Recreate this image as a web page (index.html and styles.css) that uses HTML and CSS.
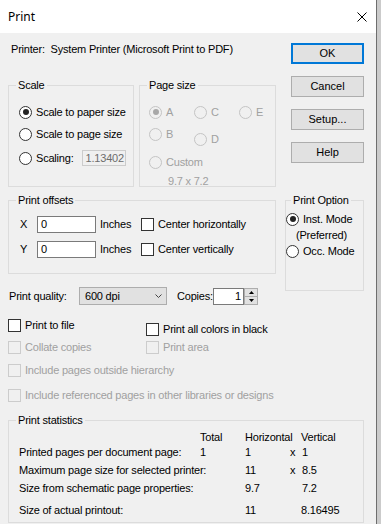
FILE: index.html
```html
<!DOCTYPE html>
<html lang="en">
<head>
    <meta charset="UTF-8">
    <title>Print</title>
    <link rel="stylesheet" href="styles.css">
</head>
<body>

    <div class="window">
        <div class="titlebar">
            <span class="title">Print</span>
            <svg class="close" width="10" height="10" viewBox="0 0 10 10">
                <path d="M0.5 0.5 L9.5 9.5 M9.5 0.5 L0.5 9.5" stroke="#000" stroke-width="1" fill="none"/>
            </svg>
        </div>

        <div class="main">
            <div class="left">
                <div class="printer">Printer:&nbsp; System Printer (Microsoft Print to PDF)</div>

                <div class="groups">
                    <fieldset class="group scale">
                        <legend>Scale</legend>
                        <div class="group-body">
                            <div class="opt"><span class="radio on"></span>Scale to paper size</div>
                            <div class="opt second"><span class="radio"></span>Scale to page size</div>
                            <div class="opt third"><span class="radio"></span>Scaling:<span class="field off">1.13402</span></div>
                        </div>
                    </fieldset>

                    <fieldset class="group pagesize">
                        <legend>Page size</legend>
                        <div class="group-body">
                            <div class="size-grid">
                                <div class="opt off"><span class="radio on"></span>A</div>
                                <div class="opt off"><span class="radio"></span>C</div>
                                <div class="opt off"><span class="radio"></span>E</div>
                                <div class="opt off"><span class="radio"></span>B</div>
                                <div class="opt off low"><span class="radio"></span>D</div>
                            </div>
                            <div class="opt off custom"><span class="radio"></span>Custom</div>
                            <div class="dim">9.7 x 7.2</div>
                        </div>
                    </fieldset>
                </div>

                <fieldset class="group offsets">
                    <legend>Print offsets</legend>
                    <div class="group-body">
                        <div class="offset-row">
                            <span class="axis">X</span>
                            <span class="field">0</span>
                            <span class="unit">Inches</span>
                            <span class="check"></span>Center horizontally
                        </div>
                        <div class="offset-row">
                            <span class="axis">Y</span>
                            <span class="field">0</span>
                            <span class="unit">Inches</span>
                            <span class="check"></span>Center vertically
                        </div>
                    </div>
                </fieldset>

                <div class="quality-row">
                    <span class="quality-label">Print quality:</span>
                    <div class="select">
                        <span>600 dpi</span>
                        <svg width="7" height="4" viewBox="0 0 7 4">
                            <path d="M0.5 0.5 L3.5 3.5 L6.5 0.5" stroke="#444" stroke-width="1" fill="none"/>
                        </svg>
                    </div>
                    <span class="copies-label">Copies:</span>
                    <span class="field copies">1</span>
                    <div class="spin">
                        <span class="spin-btn"><svg width="5" height="3" viewBox="0 0 5 3"><path d="M2.5 0 L5 3 L0 3 Z" fill="#000"/></svg></span>
                        <span class="spin-btn"><svg width="5" height="3" viewBox="0 0 5 3"><path d="M0 0 L5 0 L2.5 3 Z" fill="#000"/></svg></span>
                    </div>
                </div>
            </div>

            <div class="right">
                <div class="buttons">
                    <button class="default">OK</button>
                    <button>Cancel</button>
                    <button>Setup...</button>
                    <button>Help</button>
                </div>

                <fieldset class="group option">
                    <legend>Print Option</legend>
                    <div class="group-body">
                        <div class="opt mode"><span class="radio on"></span>Inst. Mode</div>
                        <div class="preferred">(Preferred)</div>
                        <div class="opt mode"><span class="radio"></span>Occ. Mode</div>
                    </div>
                </fieldset>
            </div>
        </div>

        <div class="checks">
            <div class="check-row first">
                <div class="opt col"><span class="check"></span>Print to file</div>
                <div class="opt black"><span class="check"></span>Print all colors in black</div>
            </div>
            <div class="check-row r2">
                <div class="opt col off"><span class="check"></span>Collate copies</div>
                <div class="opt off"><span class="check"></span>Print area</div>
            </div>
            <div class="check-row r3">
                <div class="opt off"><span class="check"></span>Include pages outside hierarchy</div>
            </div>
            <div class="check-row r4">
                <div class="opt off"><span class="check"></span>Include referenced pages in other libraries or designs</div>
            </div>
        </div>

        <fieldset class="group stats">
            <legend>Print statistics</legend>
            <div class="group-body">
                <div class="stat-row head">
                    <span></span><span>Total</span><span>Horizontal</span><span>Vertical</span>
                </div>
                <div class="stat-row">
                    <span>Printed pages per document page:</span><span>1</span><span>1</span><span>x</span><span class="v">1</span>
                </div>
                <div class="stat-row">
                    <span>Maximum page size for selected printer:</span><span></span><span>11</span><span>x</span><span class="v">8.5</span>
                </div>
                <div class="stat-row">
                    <span>Size from schematic page properties:</span><span></span><span>9.7</span><span></span><span class="v">7.2</span>
                </div>
                <div class="stat-row last">
                    <span>Size of actual printout:</span><span></span><span>11</span><span></span><span>8.16495</span>
                </div>
            </div>
        </fieldset>
    </div>

</body>
</html>
```

FILE: styles.css
```css
html {
    background-color: #cbcbcb;
}

body {
    margin: 0;
    font-family: "Liberation Sans", Arial, sans-serif;
    font-size: 11px;
    line-height: 13px;
    letter-spacing: -0.2px;
    color: #000;
}

.window {
    width: 376px;
    height: 524px;
    background-color: #f0f0f0;
    border-right: 1px solid #6e6e6e;
    overflow: hidden;
}

.titlebar {
    height: 33px;
    background-color: #fff;
    display: flex;
    align-items: center;
    justify-content: space-between;
    padding: 0 9px 0 8px;
}

.title {
    font-family: "Noto Sans", sans-serif;
    font-size: 12px;
    letter-spacing: 0;
}

.main {
    display: flex;
}

.left {
    width: 268px;
    margin-left: 8px;
}

.right {
    width: 79px;
    margin-left: 9px;
}

.printer {
    margin: 10px 0 0 3px;
}

/* group boxes */
.group {
    box-sizing: border-box;
    margin: 0;
    padding: 0;
    min-width: 0;
    border: 1px solid #dcdcdc;
}

.group legend {
    margin-left: 7px;
    padding: 0 2px;
    line-height: 13px;
}

.groups {
    display: flex;
    gap: 5px;
    margin-top: 23px;
}

.scale {
    width: 126px;
    height: 108px;
}

.scale .group-body {
    padding: 10px 0 0 10px;
}

.pagesize {
    width: 137px;
    height: 108px;
}

.pagesize .group-body {
    padding: 10px 0 0 9px;
}

.opt {
    display: flex;
    align-items: center;
    height: 20px;
    white-space: nowrap;
}

.scale .second {
    margin-top: 2px;
}

.scale .third {
    margin-top: 4px;
}

.off {
    color: #a0a0a0;
}

.radio {
    position: relative;
    box-sizing: border-box;
    width: 13px;
    height: 13px;
    flex: none;
    margin-right: 4px;
    border: 1px solid #333;
    border-radius: 50%;
    background-color: #fff;
}

.radio.on::after {
    content: "";
    position: absolute;
    inset: 2.5px;
    border-radius: 50%;
    background-color: #222;
}

.off .radio {
    border-color: #c4c4c4;
    background-color: #f0f0f0;
}

.off .radio.on::after {
    background-color: #a8a8a8;
}

.check {
    box-sizing: border-box;
    width: 13px;
    height: 13px;
    flex: none;
    margin-right: 4px;
    border: 1px solid #333;
    background-color: #fff;
}

.off .check {
    border-color: #cccccc;
    background-color: #f0f0f0;
}

.field {
    box-sizing: border-box;
    display: flex;
    align-items: center;
    height: 17px;
    padding-left: 3px;
    border: 1px solid #7a7a7a;
    background-color: #fff;
}

.field.off {
    width: 44px;
    height: 16px;
    margin-left: 8px;
    border-color: #cccccc;
    background-color: #f0f0f0;
    color: #6d6d6d;
}

.size-grid {
    display: grid;
    grid-template-columns: 45px 45px 40px;
    row-gap: 2px;
}

.size-grid .low {
    padding-top: 5px;
}

.pagesize .custom {
    margin-top: 3px;
}

.dim {
    margin: 3px 0 0 19px;
    color: #a0a0a0;
}

/* offsets */
.offsets {
    width: 268px;
    height: 80px;
    margin-top: 7px;
}

.offsets .group-body {
    padding: 9px 0 0 11px;
}

.offset-row {
    display: flex;
    align-items: center;
    height: 17px;
    white-space: nowrap;
}

.offset-row + .offset-row {
    margin-top: 8px;
}

.axis {
    width: 17px;
}

.offset-row .field {
    width: 59px;
}

.unit {
    width: 45px;
    padding-left: 4px;
    box-sizing: border-box;
}

/* quality row */
.quality-row {
    display: flex;
    align-items: center;
    height: 18px;
    margin-top: 13px;
    margin-left: 1px;
    white-space: nowrap;
}

.quality-label {
    width: 70px;
}

.select {
    box-sizing: border-box;
    display: flex;
    align-items: center;
    justify-content: space-between;
    width: 88px;
    height: 18px;
    padding: 0 4px 0 5px;
    border: 1px solid #adadad;
    background-color: #e1e1e1;
}

.copies-label {
    margin-left: 10px;
    width: 36px;
}

.field.copies {
    width: 31px;
    justify-content: flex-end;
    padding: 0 2px 0 0;
}

.spin {
    display: flex;
    flex-direction: column;
    width: 14px;
    height: 17px;
}

.spin-btn {
    flex: 1;
    display: flex;
    align-items: center;
    justify-content: center;
    border: 1px solid #adadad;
    background-color: #e1e1e1;
}

.spin-btn + .spin-btn {
    border-top: none;
}

/* buttons */
.buttons {
    display: flex;
    flex-direction: column;
    gap: 12px;
    margin: 10px 0 0 6px;
}

button {
    box-sizing: border-box;
    width: 73px;
    height: 21px;
    padding: 0;
    font: inherit;
    color: #000;
    background-color: #e1e1e1;
    border: 1px solid #adadad;
}

button.default {
    border: 2px solid #0078d7;
}

.option {
    width: 79px;
    height: 97px;
    margin-top: 31px;
}

.option legend {
    margin-left: 5px;
}

.option .group-body {
    padding-top: 4px;
}

.option .mode {
    height: 16px;
}

.preferred {
    height: 16px;
    line-height: 16px;
    text-align: center;
    padding-right: 6px;
}

/* check boxes */
.checks {
    margin: 14px 0 0 8px;
}

.check-row {
    display: flex;
    align-items: flex-start;
}

.check-row .opt {
    height: 13px;
}

.check-row .col {
    width: 138px;
}

.check-row .black {
    margin-top: 4px;
}

.r2 {
    margin-top: 5px;
}

.r3 {
    margin-top: 10px;
}

.r4 {
    margin-top: 12px;
}

/* statistics */
.stats {
    width: 356px;
    height: 109px;
    margin: 12px 0 0 8px;
}

.stats .group-body {
    padding: 4px 0 0 10px;
}

.stat-row {
    display: grid;
    grid-template-columns: 181px 45px 45px 11px auto;
    align-items: center;
    height: 18px;
    white-space: nowrap;
}

.stat-row.head {
    height: 12px;
    grid-template-columns: 181px 45px 56px auto;
}

.stat-row .v {
    padding-left: 1px;
}

.stat-row.last {
    margin-top: 4px;
}
```
